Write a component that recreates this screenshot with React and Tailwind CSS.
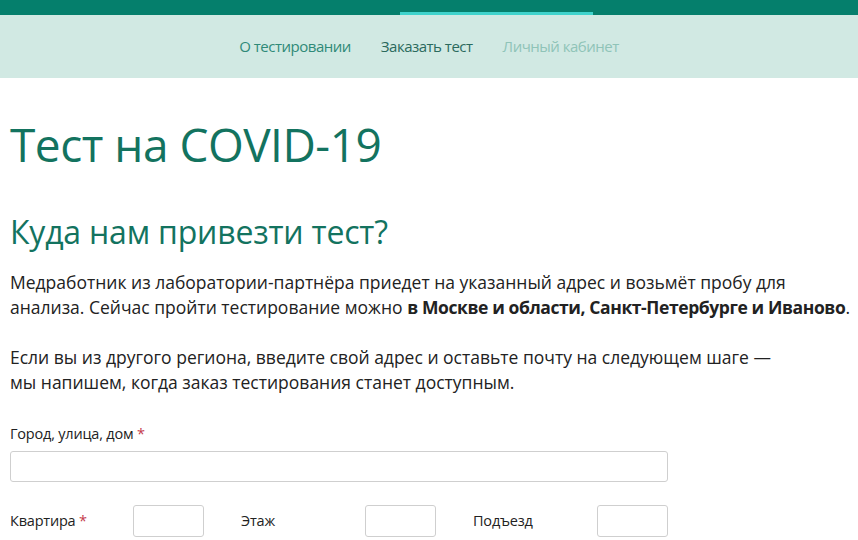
export default function App() {
  const font = { fontFamily: '"Open Sans", "Noto Sans", sans-serif' };
  return (
    <div className="w-[858px] h-[540px] overflow-hidden bg-white" style={font}>
      <div className="h-[15px] bg-[#057f6c] flex justify-start">
        <div className="ml-[400px] w-[193px] h-[3px] mt-[12px] bg-[#3fd3cc]" />
      </div>
      <div className="h-[63px] bg-[#d1e9e3] flex items-center justify-center gap-[30px] text-[15px] pl-[0px]">
        <span className="text-[#2f8a78] tracking-[-0.5px]">О тестировании</span>
        <span className="text-[#2b6a5d] tracking-[-0.5px]">Заказать тест</span>
        <span className="text-[#8fc4b8] tracking-[-0.5px]">Личный кабинет</span>
      </div>
      <div className="px-[10px]">
        <h1 className="mt-[36px] text-[46px] leading-[60px] text-[#13735f] tracking-[-0.5px]">Тест на COVID-19</h1>
        <h2 className="mt-[36px] text-[32px] leading-[44px] text-[#13735f] tracking-[-0.2px]">Куда нам привезти тест?</h2>
        <div className="mt-[16px] text-[17.5px] leading-[25px] text-[#222] whitespace-nowrap">
          <p>
            Медработник из лаборатории-партнёра приедет на указанный адрес и возьмёт пробу для<br />
            анализа. Сейчас пройти тестирование можно <b className="font-bold tracking-[-0.4px]">в Москве и области, Санкт-Петербурге и Иваново</b>.
          </p>
          <p className="mt-[25px]">
            Если вы из другого региона, введите свой адрес и оставьте почту на следующем шаге —<br />
            мы напишем, когда заказ тестирования станет доступным.
          </p>
        </div>
        <div className="mt-[29px] text-[14.5px] leading-[20px] text-[#222] tracking-[-0.2px]">
          Город, улица, дом <span className="text-[#c4394b]">*</span>
        </div>
        <div className="mt-[7px] w-[658px] h-[31px] border border-[#cfcfcf] rounded-[3px]" />
        <div className="mt-[23px] flex items-center text-[14.5px] text-[#222] tracking-[-0.2px]">
          <span className="w-[123px]">Квартира <span className="text-[#c4394b]">*</span></span>
          <div className="w-[71px] h-[32px] border border-[#cfcfcf] rounded-[3px]" />
          <span className="ml-[37px] w-[124px]">Этаж</span>
          <div className="w-[71px] h-[32px] border border-[#cfcfcf] rounded-[3px]" />
          <span className="ml-[37px] w-[124px]">Подъезд</span>
          <div className="w-[71px] h-[32px] border border-[#cfcfcf] rounded-[3px]" />
        </div>
      </div>
    </div>
  );
}
